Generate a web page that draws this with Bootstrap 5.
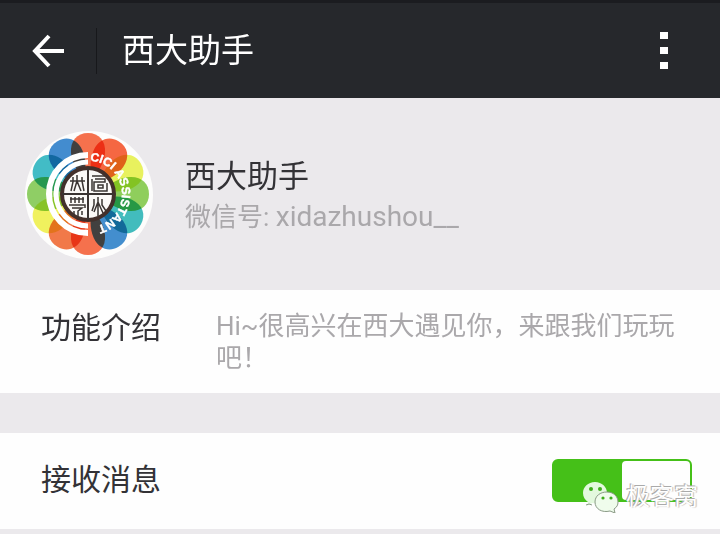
<!DOCTYPE html>
<html lang="zh-CN">
<head>
<meta charset="utf-8">
<meta name="viewport" content="width=device-width, initial-scale=1">
<title>西大助手</title>
<link href="https://cdn.jsdelivr.net/npm/bootstrap@5.3.0/dist/css/bootstrap.min.css" rel="stylesheet">
<style>
body { background: #ebe9ec; color: #333236; font-family: Roboto, "Noto Sans CJK SC", sans-serif; }
.topbar { background: #26282c; border-top: 3px solid #1b1c20; height: 98px; padding: 0 48px 0 24px; }
.icon-btn { background: none; border: 0; padding: 8px; line-height: 0; }
.topbar-rule { width: 1px; height: 46px; background: #17181b; margin: 0 25px 0 24px; }
.topbar-title { font-size: 33px; line-height: 40px; color: #fff; }
.profile { padding: 22px 14px 20px; gap: 21px; }
.profile-text { padding-top: 4px; }
.profile-name { font-size: 31px; line-height: 40px; }
.profile-id { font-size: 26px; line-height: 40px; color: #aaa8ab; }
.account { font-size: 28px; }
.cell { background: #fefefe; padding: 0 28px 0 41px; }
.cell-intro { padding-top: 20px; padding-bottom: 19px; }
.cell-label { font-size: 30px; line-height: 36px; width: 175px; }
.cell-text { font-size: 26px; line-height: 32px; color: #aaa8ab; }
.cell-switch { margin-top: 40px; padding-bottom: 2px; height: 96px; }
.toggle { appearance: none; display: block; width: 140px; height: 43px; margin: 0; border: 2px solid #45c018; border-radius: 6px; background: #fefefe; }
.toggle::before { content: ""; display: block; width: 50%; height: 100%; background: #fefefe; border-radius: 4px; }
.toggle:checked { background: #45c018; }
.toggle:checked::before { margin-left: 50%; }
.stamp { right: 22px; bottom: 16px; pointer-events: none; gap: 6px; }
.stamp-text { font-size: 24px; line-height: 32px; color: #fff; text-shadow: -1px -1px 0 #aaa, 1px 0 1px #bbb; }
.emblem-petals { isolation: isolate; }
.emblem-petals use { mix-blend-mode: multiply; fill-opacity: .9; }
.emblem-text { font: bold 12px "Liberation Sans", sans-serif; fill: #fff; stroke: #fff; stroke-width: .4; }
</style>
<script src="https://cdn.jsdelivr.net/npm/bootstrap@5.3.0/dist/js/bootstrap.bundle.min.js"></script>
</head>
<body>
<header class="topbar d-flex align-items-center">
  <button type="button" class="icon-btn" aria-label="返回">
    <svg width="32" height="34" viewBox="0 0 32 34" fill="none" stroke="#fff" stroke-width="4"><path d="M17 2 3 17l14 15M3 17h29"/></svg>
  </button>
  <div class="topbar-rule"></div>
  <h1 class="topbar-title fw-normal m-0 flex-grow-1">西大助手</h1>
  <button type="button" class="icon-btn p-1" aria-label="更多">
    <svg width="8" height="38" viewBox="0 0 8 38" fill="#fff"><path d="M0 0h8v7H0zM0 15h8v7H0zM0 30h8v7H0z"/></svg>
  </button>
</header>

<main>
  <section class="profile d-flex align-items-center">
    <svg class="flex-shrink-0" width="150" height="150" viewBox="0 0 150 150" role="img" aria-label="CICI ASSISTANT">
      <defs>
        <path id="petal" d="M74 13c11 0 18 8 17 20-1 10-6 19-17 30-11-11-16-20-17-30-1-12 6-20 17-20z"/>
        <path id="emblem-arc" d="M76 41a33 33 0 0 1-2 66l-6-1" fill="none"/>
      </defs>
      <circle cx="75" cy="75" r="64" fill="#fdfdfc"/>
      <g class="emblem-petals">
        <use href="#petal" fill="#f4623a"/>
        <use href="#petal" fill="#f4562d" transform="rotate(30 74 74)"/>
        <use href="#petal" fill="#e5f04d" transform="rotate(60 74 74)"/>
        <use href="#petal" fill="#83c94a" transform="rotate(90 74 74)"/>
        <use href="#petal" fill="#2eb5b6" transform="rotate(120 74 74)"/>
        <use href="#petal" fill="#2f82c9" transform="rotate(150 74 74)"/>
        <use href="#petal" fill="#f4623a" transform="rotate(180 74 74)"/>
        <use href="#petal" fill="#f06a35" transform="rotate(210 74 74)"/>
        <use href="#petal" fill="#eef04d" transform="rotate(240 74 74)"/>
        <use href="#petal" fill="#83c954" transform="rotate(270 74 74)"/>
        <use href="#petal" fill="#2eb5c0" transform="rotate(300 74 74)"/>
        <use href="#petal" fill="#2f7fca" transform="rotate(330 74 74)"/>
      </g>
      <g fill="none" stroke="#fff">
        <path stroke-width="6" d="M74 35a39 39 0 0 0 0 78"/>
        <path stroke-width="5" d="M74 42a32 32 0 0 0 0 64"/>
      </g>
      <circle cx="74" cy="74" r="26" fill="#fbf9f7" stroke="#43302b" stroke-width="4"/>
      <g fill="none" stroke="#3a3432" stroke-width="2">
        <path d="M74 48v52M48 74h52"/>
        <path stroke-width="1.5" d="M56 61h15M63 55v6M59 57v5l-2 9M63 61l-3 10M63 61l4 10M68 57v4l2 10"/>
        <path stroke-width="1.5" d="M78 56h13M81 59h10v3H80v9h13v-8M84 65h5v3h-5zM78 59v12"/>
        <path stroke-width="1.5" d="M56 79h14M57 77v6M61 77v6M65 77v6M69 77v6M55 85h16v3M58 88h10l-4 3v6M60 91v4M68 91v4"/>
        <path stroke-width="1.5" d="M84 77v19M80 79v6l-2 6M88 79v6l4 6M84 82l-4 10M84 82l5 11"/>
      </g>
      <text class="emblem-text"><textPath href="#emblem-arc">CICI ASSISTANT</textPath></text>
    </svg>
    <div class="profile-text">
      <h2 class="profile-name fw-normal m-0">西大助手</h2>
      <p class="profile-id m-0">微信号: <span class="account">xidazhushou__</span></p>
    </div>
  </section>

  <section class="cell cell-intro d-flex align-items-start">
    <h3 class="cell-label fw-normal m-0 flex-shrink-0">功能介绍</h3>
    <p class="cell-text m-0">Hi~很高兴在西大遇见你，来跟我们玩玩吧！</p>
  </section>

  <section class="cell cell-switch d-flex align-items-center justify-content-between position-relative">
    <label class="cell-label" for="receive">接收消息</label>
    <input class="toggle" type="checkbox" role="switch" id="receive" checked>
    <div class="stamp position-absolute d-flex align-items-center">
      <svg width="38" height="32" viewBox="0 0 38 32">
        <path d="M13 1C6 1 1 6 1 12c0 4 2 7 5 9l-1 4 5-3c8 2 15-3 15-10C25 6 20 1 13 1z" fill="#e3f9de"/>
        <path d="M25 11c-7 0-12 4-12 10 0 7 7 11 15 9l5 2-1-4c3-2 4-4 4-7 0-6-5-10-11-10z" fill="#effcec" stroke="#8a9a86"/>
        <path d="m4 24 3-1 3 1" fill="none" stroke="#8a9a86"/>
        <g fill="#3fae1c"><circle cx="9" cy="8" r="2"/><circle cx="18" cy="8" r="2"/><circle cx="21" cy="17" r="1.6"/><circle cx="29" cy="17" r="1.6"/></g>
      </svg>
      <span class="stamp-text">极客窝</span>
    </div>
  </section>
</main>
</body>
</html>
